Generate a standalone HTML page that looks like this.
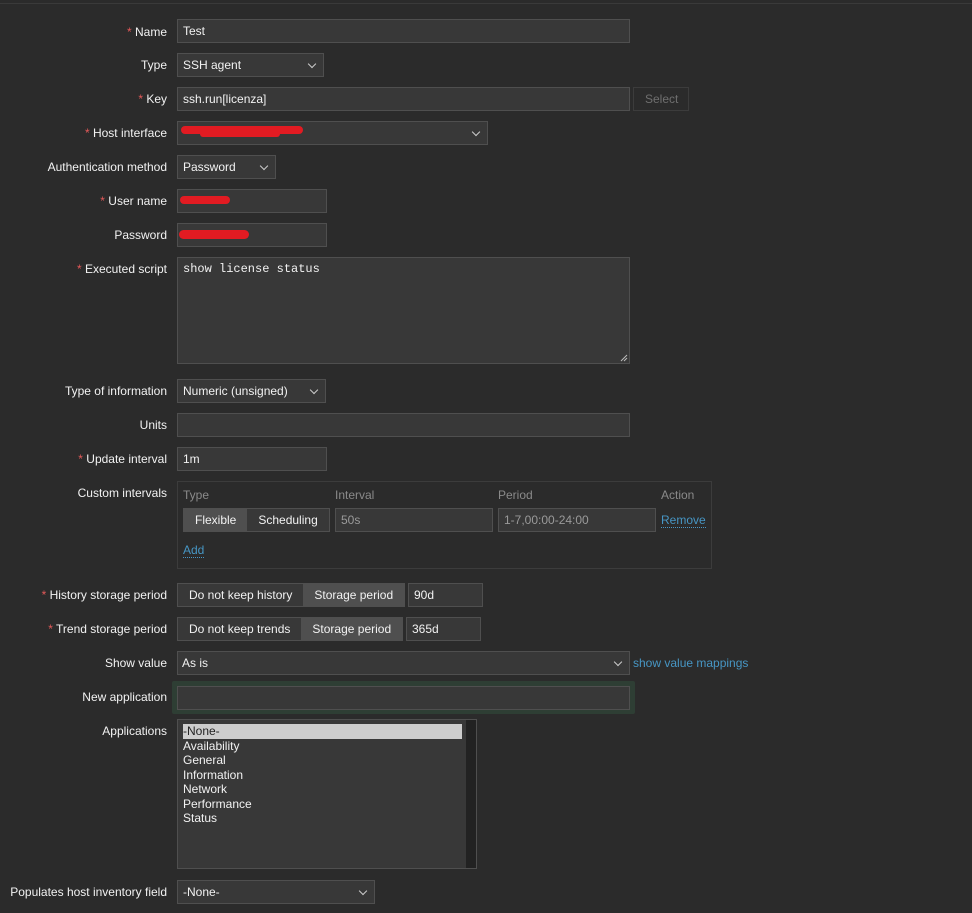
<!DOCTYPE html>
<html><head><meta charset="utf-8"><style>
*{box-sizing:border-box;margin:0;padding:0}
body{width:972px;height:913px;background:#2b2b2b;font-family:"Liberation Sans",Arial,sans-serif;font-size:12px;color:#f2f2f2;position:relative;overflow:hidden}
.topline{position:absolute;left:0;top:3px;width:972px;height:1px;background:#3a3a3a}
.l{position:absolute;right:805px;white-space:nowrap;line-height:14px;margin-top:1px}
.l b{color:#e45959;font-weight:normal}
.in{position:absolute;background:#383838;border:1px solid #4f4f4f;height:24px;line-height:22px;padding-left:5px;white-space:nowrap}
.sel::after{content:"";position:absolute;right:8px;top:7px;width:5px;height:5px;border-right:1px solid #ccc;border-bottom:1px solid #ccc;transform:rotate(45deg)}
.red{position:absolute;background:#e21b22;border-radius:6px;height:7px}
.lnk{position:absolute;color:#4796c4;white-space:nowrap}
.seg{position:absolute;display:flex;border:1px solid #4f4f4f;height:24px;background:#383838}
.seg span{padding:0 11px;line-height:22px;white-space:nowrap}
.seg .a{background:#4f4f4f}
</style></head><body>
<div class="topline"></div>

<div class="l" style="top:24px"><b>*</b> Name</div>
<div class="in" style="left:177px;top:19px;width:453px">Test</div>

<div class="l" style="top:57px">Type</div>
<div class="in sel" style="left:177px;top:53px;width:147px">SSH agent</div>

<div class="l" style="top:91px"><b>*</b> Key</div>
<div class="in" style="left:177px;top:87px;width:453px">ssh.run[licenza]</div>
<div class="in" style="left:633px;top:87px;width:56px;color:#6f6f6f;background:#2b2b2b;border-color:#3c3c3c;padding-left:11px">Select</div>

<div class="l" style="top:125px"><b>*</b> Host interface</div>
<div class="in sel" style="left:177px;top:121px;width:311px"></div>
<div class="red" style="left:181px;top:126px;width:122px;height:8px"></div>
<div class="red" style="left:200px;top:131px;width:80px;height:6px"></div>

<div class="l" style="top:159px">Authentication method</div>
<div class="in sel" style="left:177px;top:155px;width:99px">Password</div>

<div class="l" style="top:193px"><b>*</b> User name</div>
<div class="in" style="left:177px;top:189px;width:150px"></div>
<div class="red" style="left:180px;top:196px;width:50px;height:8px"></div>

<div class="l" style="top:227px">Password</div>
<div class="in" style="left:177px;top:223px;width:150px"></div>
<div class="red" style="left:179px;top:230px;width:70px;height:9px"></div>

<div class="l" style="top:261px"><b>*</b> Executed script</div>
<div class="in" style="left:177px;top:257px;width:453px;height:107px;line-height:20px;font-family:'Liberation Mono',monospace;font-size:12px;padding-top:1px">show license status
<svg style="position:absolute;right:1px;bottom:1px" width="8" height="8"><path d="M1 7L7 1M4 7L7 4" stroke="#bbb" stroke-width="1"/></svg></div>

<div class="l" style="top:383px">Type of information</div>
<div class="in sel" style="left:177px;top:379px;width:149px">Numeric (unsigned)</div>

<div class="l" style="top:417px">Units</div>
<div class="in" style="left:177px;top:413px;width:453px"></div>

<div class="l" style="top:451px"><b>*</b> Update interval</div>
<div class="in" style="left:177px;top:447px;width:150px">1m</div>

<div class="l" style="top:485px">Custom intervals</div>
<div style="position:absolute;left:177px;top:481px;width:535px;height:88px;border:1px solid #3c3c3c"></div>
<div style="position:absolute;left:183px;top:488px;color:#8a8a8a">Type</div>
<div style="position:absolute;left:335px;top:488px;color:#8a8a8a">Interval</div>
<div style="position:absolute;left:498px;top:488px;color:#8a8a8a">Period</div>
<div style="position:absolute;left:661px;top:488px;color:#8a8a8a">Action</div>
<div class="seg" style="left:183px;top:508px"><span class="a">Flexible</span><span>Scheduling</span></div>
<div class="in" style="left:335px;top:508px;width:158px;color:#9a9a9a">50s</div>
<div class="in" style="left:498px;top:508px;width:158px;color:#9a9a9a">1-7,00:00-24:00</div>
<div class="lnk" style="left:661px;top:513px;border-bottom:1px dotted #4796c4">Remove</div>
<div class="lnk" style="left:183px;top:543px;border-bottom:1px dotted #4796c4">Add</div>

<div class="l" style="top:587px"><b>*</b> History storage period</div>
<div class="seg" style="left:177px;top:583px"><span>Do not keep history</span><span class="a">Storage period</span></div>
<div class="in" style="left:408px;top:583px;width:75px">90d</div>

<div class="l" style="top:621px"><b>*</b> Trend storage period</div>
<div class="seg" style="left:177px;top:617px"><span>Do not keep trends</span><span class="a">Storage period</span></div>
<div class="in" style="left:406px;top:617px;width:75px">365d</div>

<div class="l" style="top:655px">Show value</div>
<div class="in sel" style="left:177px;top:651px;width:453px;padding-left:4px">As is</div>
<div class="lnk" style="left:633px;top:656px">show value mappings</div>

<div class="l" style="top:689px">New application</div>
<div style="position:absolute;left:172px;top:681px;width:463px;height:33px;background:#2e3e34;border-radius:2px"></div>
<div class="in" style="left:177px;top:686px;width:453px"></div>

<div class="l" style="top:723px">Applications</div>
<div class="in" style="left:177px;top:719px;width:300px;height:150px;padding:4px 0 0 5px;line-height:14.5px">
<div style="position:absolute;right:0;top:0;width:10px;height:148px;background:#222"></div>
<div style="background:#cdcdcd;color:#222;width:279px">-None-</div>
<div>Availability</div><div>General</div><div>Information</div><div>Network</div><div>Performance</div><div>Status</div>
</div>

<div class="l" style="top:884px">Populates host inventory field</div>
<div class="in sel" style="left:177px;top:880px;width:198px">-None-</div>
</body></html>
